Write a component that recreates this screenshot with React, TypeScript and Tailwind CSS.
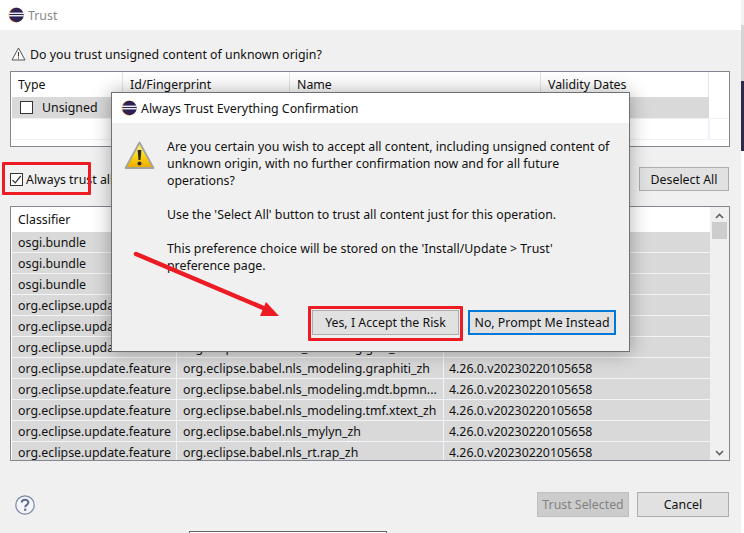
import React from "react";

function EclipseIcon() {
  return (
    <svg width="16" height="16" viewBox="0 0 16 16" className="shrink-0">
      <circle cx="8" cy="8" r="7.5" fill="#f29a3c" />
      <circle cx="8.5" cy="8" r="7.2" fill="#2c2255" />
      <rect x="0.8" y="5.6" width="14.8" height="1.3" fill="#ffffff" />
      <rect x="0.8" y="8.1" width="14.8" height="1.3" fill="#ffffff" />
    </svg>
  );
}

function Btn({ children, className = "" }: { children?: React.ReactNode; className?: string }) {
  return (
    <div className={"flex items-center justify-center h-[25px] border border-[#adadad] bg-[#e1e1e1] text-[#111] " + className}>
      {children}
    </div>
  );
}

const rows: [string, string, boolean][] = [
  ["osgi.bundle", "", false],
  ["osgi.bundle", "", false],
  ["osgi.bundle", "", false],
  ["org.eclipse.update.feature", "", false],
  ["org.eclipse.update.feature", "", false],
  ["org.eclipse.update.feature", "org.eclipse.babel.nls_modeling.gmf_zh", true],
  ["org.eclipse.update.feature", "org.eclipse.babel.nls_modeling.graphiti_zh", true],
  ["org.eclipse.update.feature", "org.eclipse.babel.nls_modeling.mdt.bpmn...", true],
  ["org.eclipse.update.feature", "org.eclipse.babel.nls_modeling.tmf.xtext_zh", true],
  ["org.eclipse.update.feature", "org.eclipse.babel.nls_mylyn_zh", true],
  ["org.eclipse.update.feature", "org.eclipse.babel.nls_rt.rap_zh", true],
];

export default function App() {
  return (
    <div className="relative w-[744px] h-[533px] overflow-hidden bg-[#f0f0f0] font-['Noto_Sans',sans-serif] text-[12.35px] leading-[17px] text-[#111]">
      {/* Window title */}
      <div className="h-[30px] bg-white flex items-center pl-[8px] gap-[4px] mr-[3px]">
        <EclipseIcon />
        <span className="text-[#8a8a8a]">Trust</span>
      </div>

      {/* Prompt */}
      <div className="mt-[14px] h-[20px] flex items-center pl-[11px] gap-[4px]">
        <svg width="15" height="14" viewBox="0 0 15 14" className="shrink-0">
          <path d="M7.5 1 L14 13 H1 Z" fill="#fbfbfb" stroke="#555" strokeWidth="1" strokeLinejoin="round" />
          <rect x="7" y="5" width="1" height="4.5" fill="#333" />
          <rect x="7" y="10.5" width="1" height="1.2" fill="#333" />
        </svg>
        <span>Do you trust unsigned content of unknown origin?</span>
      </div>

      {/* Top table */}
      <div className="mt-[7px] ml-[10px] w-[720px] h-[76px] border border-[#82878f] bg-white pl-[1px] flex flex-col">
        <div className="h-[25px] flex items-center shrink-0">
          <div className="w-[111px] pl-[6px] h-full flex items-center border-r border-[#e5e5e5]">Type</div>
          <div className="w-[167px] pl-[7px] h-full flex items-center border-r border-[#e5e5e5]">Id/Fingerprint</div>
          <div className="w-[251px] pl-[7px] h-full flex items-center border-r border-[#e5e5e5]">Name</div>
          <div className="w-[168px] pl-[7px] h-full flex items-center border-r border-[#e5e5e5]">Validity Dates</div>
        </div>
        <div className="h-[21px] w-[697px] bg-[#d9d9d9] flex items-center pl-[8px] gap-[9px] shrink-0">
          <span className="w-[13px] h-[13px] border border-[#333] bg-white" />
          <span>Unsigned</span>
        </div>
        <div className="h-[22px] w-full border-t border-b border-[#eef1f6]">
          <div className="h-full w-[698px] border-r-2 border-[#eef1f9]" />
        </div>
      </div>

      {/* Select row */}
      <div className="mt-[20px] h-[24px] pl-[10px] pr-[15px] flex items-center justify-between">
        <div className="flex items-center gap-[3px]">
          <span className="w-[13px] h-[13px] border border-[#333] bg-white flex items-center justify-center">
            <svg width="11" height="11" viewBox="0 0 11 11">
              <path d="M1.5 6 L4.2 8.8 L9.8 2" fill="none" stroke="#333" strokeWidth="1.2" />
            </svg>
          </span>
          <span>Always trust all</span>
        </div>
        <div className="flex items-center gap-[9px]">
          <Btn className="w-[90px] !h-[24px]" />
          <Btn className="w-[90px] !h-[24px]">Deselect All</Btn>
        </div>
      </div>

      {/* Bottom table */}
      <div className="mt-[15px] ml-[10px] w-[720px] h-[255px] border border-[#82878f] bg-white pl-[1px] flex overflow-hidden">
        <div className="w-[698px] shrink-0">
          <div className="h-[25px] flex items-center">
            <div className="w-[165px] pl-[6px]">Classifier</div>
          </div>
          {rows.map((r, i) => (
            <div key={i} className="h-[21px] flex items-center bg-[#d9d9d9] border-b border-[#f1f4f8]">
              <div className="w-[165px] h-full pl-[6px] flex items-center border-r border-[#f1f4f8]">{r[0]}</div>
              <div className="w-[267px] h-full pl-[6px] flex items-center border-r border-[#f1f4f8] overflow-hidden whitespace-nowrap">{r[1]}</div>
              {r[2] && <div className="pl-[5px]">4.26.0.v20230220105658</div>}
            </div>
          ))}
        </div>
        <div className="flex-1 flex flex-col items-center bg-[#f0f0f0] pt-[6px] pb-[4px]">
          <svg width="9" height="6" viewBox="0 0 9 6" className="shrink-0">
            <path d="M1 5 L4.5 1.5 L8 5" fill="none" stroke="#606060" strokeWidth="1.6" />
          </svg>
          <div className="w-[15px] h-[17px] bg-[#cdcdcd] mt-[3px]" />
          <div className="flex-1" />
          <svg width="9" height="6" viewBox="0 0 9 6" className="shrink-0">
            <path d="M1 1 L4.5 4.5 L8 1" fill="none" stroke="#606060" strokeWidth="1.6" />
          </svg>
        </div>
      </div>

      {/* Footer */}
      <div className="mt-[31px] h-[25px] pl-[15px] pr-[15px] flex items-center justify-between">
        <svg width="20" height="20" viewBox="0 0 20 20">
          <circle cx="10" cy="10" r="9.2" fill="#f4f5f8" stroke="#7a88a8" strokeWidth="1.2" />
          <path d="M6.8 7.6 C6.8 3.9 13.4 3.9 13.4 7.6 C13.4 9.9 10.2 9.8 10.2 12.2" fill="none" stroke="#5a6a8e" strokeWidth="2" />
          <rect x="9.1" y="13.6" width="2.2" height="2.2" fill="#5a6a8e" />
        </svg>
        <div className="flex items-center gap-[8px]">
          <Btn className="w-[92px] !bg-[#cccccc] !border-[#bfbfbf] !text-[#838383]">Trust Selected</Btn>
          <Btn className="w-[92px]">Cancel</Btn>
        </div>
      </div>

      {/* Window edge behind */}
      <div className="absolute right-0 top-0 w-[3px] h-[533px] flex flex-col">
        <div className="h-[25px] bg-[#f2f2f2]" />
        <div className="h-[56px] bg-[#d6d6d6]" />
        <div className="h-[70px] bg-[#2c2c4a]" />
        <div className="flex-1 bg-white" />
      </div>
      <div className="absolute left-[189px] top-[531px] w-[198px] h-[2px] bg-white border-t border-x border-[#666]" />

      {/* Confirmation dialog */}
      <div className="absolute left-[111px] top-[92px] w-[519px] h-[260px] border border-[#6f7175] bg-[#f0f0f0] shadow-[0_0_18px_rgba(0,0,0,0.32)] flex flex-col">
        <div className="h-[30px] bg-white flex items-center pl-[9px] gap-[4px] shrink-0">
          <EclipseIcon />
          <span className="text-[#111]">Always Trust Everything Confirmation</span>
        </div>
        <div className="flex pt-[15px] pl-[12px] pr-[12px] h-[187px] shrink-0">
          <svg width="31" height="29" viewBox="0 0 31 29" className="shrink-0 mt-[3px]">
            <defs>
              <linearGradient id="warn" x1="0" y1="0" x2="0" y2="1">
                <stop offset="0" stopColor="#fff3a0" />
                <stop offset="0.55" stopColor="#fbd20f" />
                <stop offset="1" stopColor="#eba900" />
              </linearGradient>
            </defs>
            <path d="M15.5 1.5 L29.5 27 H1.5 Z" fill="url(#warn)" stroke="#a3a39b" strokeWidth="1.8" strokeLinejoin="round" />
            <path d="M13.6 9 H17.4 L16.5 19 H14.5 Z" fill="#2a2a22" />
            <circle cx="15.5" cy="22.5" r="2" fill="#2a2a22" />
          </svg>
          <div className="ml-[12px]">
            <p>Are you certain you wish to accept all content, including unsigned content of<br />unknown origin, with no further confirmation now and for all future<br />operations?</p>
            <p className="mt-[17px]">Use the 'Select All' button to trust all content just for this operation.</p>
            <p className="mt-[17px]">This preference choice will be stored on the 'Install/Update &gt; Trust'<br />preference page.</p>
          </div>
        </div>
        <div className="flex justify-end gap-[9px] pr-[13px]">
          <Btn className="w-[147px]">Yes, I Accept the Risk</Btn>
          <Btn className="w-[148px] !border-2 !border-[#0078d7]">No, Prompt Me Instead</Btn>
        </div>
      </div>

      {/* Annotations */}
      <div className="absolute left-[2px] top-[162px] w-[89px] h-[33px] border-[3px] border-[#ed1c24] rounded-[1px]" />
      <div className="absolute left-[308px] top-[306px] w-[155px] h-[35px] border-[3px] border-[#ed1c24] rounded-[1px]" />
      <svg className="absolute left-0 top-0 pointer-events-none" width="744" height="533" viewBox="0 0 744 533">
        <path d="M136 254 L268 310" stroke="#ed1c24" strokeWidth="4.5" strokeLinecap="round" />
        <path d="M279 316 L260 316 L266 302 Z" fill="#ed1c24" />
      </svg>
    </div>
  );
}
